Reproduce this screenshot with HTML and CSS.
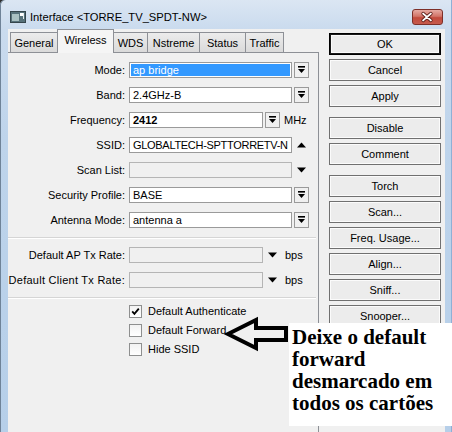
FILE: index.html
```html
<!DOCTYPE html>
<html>
<head>
<meta charset="utf-8">
<link rel="stylesheet" href="styles.css">
</head>
<body>
<div class="window">
  <div class="titlebar">
    <svg class="appicon" width="16" height="12" viewBox="0 0 16 12">
      <rect x="0.5" y="0.5" width="15" height="11" fill="#56717a" stroke="#34454c"/>
      <rect x="2" y="3" width="7" height="7" fill="#a9c0c2"/>
      <rect x="10" y="2" width="3" height="3" fill="#ffffff"/>
      <rect x="13" y="2" width="1" height="6" fill="#e8eef0"/>
    </svg>
    <span class="title">Interface &lt;TORRE_TV_SPDT-NW&gt;</span>
    <div class="close">
      <svg width="31" height="16" viewBox="0 0 31 16">
        <path d="M11.5 4.5 L19.5 11.5 M19.5 4.5 L11.5 11.5" stroke="#5a1c16" stroke-width="3.6" stroke-linecap="round"/>
        <path d="M11.5 4.5 L19.5 11.5 M19.5 4.5 L11.5 11.5" stroke="#ffffff" stroke-width="2" stroke-linecap="round"/>
      </svg>
    </div>
  </div>
  <div class="client">
    <div class="left">
      <div class="tabs">
        <div class="tab w-general">General</div>
        <div class="tab sel w-wireless">Wireless</div>
        <div class="tab w-wds">WDS</div>
        <div class="tab w-nstreme">Nstreme</div>
        <div class="tab w-status">Status</div>
        <div class="tab w-traffic">Traffic</div>
      </div>
      <div class="panel">
        <div class="row">
          <span class="lbl">Mode:</span>
          <div class="field long"><span class="hl">ap bridge</span></div>
          <div class="ddbtn"><svg width="13" height="14" viewBox="0 0 13 14"><rect x="3" y="3" width="7" height="1.6"/><polygon points="3,6 10,6 6.5,10"/></svg></div>
        </div>
        <div class="row">
          <span class="lbl">Band:</span>
          <div class="field long">2.4GHz-B</div>
          <div class="ddbtn"><svg width="13" height="14" viewBox="0 0 13 14"><rect x="3" y="3" width="7" height="1.6"/><polygon points="3,6 10,6 6.5,10"/></svg></div>
        </div>
        <div class="row">
          <span class="lbl">Frequency:</span>
          <div class="field short bold">2412</div>
          <div class="ddbtn"><svg width="13" height="14" viewBox="0 0 13 14"><rect x="3" y="3" width="7" height="1.6"/><polygon points="3,6 10,6 6.5,10"/></svg></div>
          <span class="unit">MHz</span>
        </div>
        <div class="row">
          <span class="lbl">SSID:</span>
          <div class="field long tight">GLOBALTECH-SPTTORRETV-N</div>
          <svg class="tri" width="10" height="6" viewBox="0 0 10 6"><polygon points="0,5.5 9,5.5 4.5,0.5"/></svg>
        </div>
        <div class="row">
          <span class="lbl">Scan List:</span>
          <div class="field long off"></div>
          <svg class="tri" width="10" height="6" viewBox="0 0 10 6"><polygon points="0,0.5 9,0.5 4.5,5.5"/></svg>
        </div>
        <div class="row">
          <span class="lbl">Security Profile:</span>
          <div class="field long">BASE</div>
          <div class="ddbtn"><svg width="13" height="14" viewBox="0 0 13 14"><rect x="3" y="3" width="7" height="1.6"/><polygon points="3,6 10,6 6.5,10"/></svg></div>
        </div>
        <div class="row">
          <span class="lbl">Antenna Mode:</span>
          <div class="field long">antenna a</div>
          <div class="ddbtn"><svg width="13" height="14" viewBox="0 0 13 14"><rect x="3" y="3" width="7" height="1.6"/><polygon points="3,6 10,6 6.5,10"/></svg></div>
        </div>
        <div class="sep"></div>
        <div class="row">
          <span class="lbl">Default AP Tx Rate:</span>
          <div class="field short off"></div>
          <svg class="tri tri-rate" width="10" height="6" viewBox="0 0 10 6"><polygon points="0,0.5 9,0.5 4.5,5.5"/></svg>
          <span class="unit bps">bps</span>
        </div>
        <div class="row">
          <span class="lbl wide">Default Client Tx Rate:</span>
          <div class="field short off"></div>
          <svg class="tri tri-rate" width="10" height="6" viewBox="0 0 10 6"><polygon points="0,0.5 9,0.5 4.5,5.5"/></svg>
          <span class="unit bps">bps</span>
        </div>
        <div class="sep sep2"></div>
        <div class="check">
          <span class="box"><svg width="11" height="11" viewBox="0 0 11 11"><path d="M2.2 5.4 L4.4 7.8 L8.8 2.6" fill="none" stroke="#000" stroke-width="1.8"/></svg></span>
          <span class="ctext">Default Authenticate</span>
        </div>
        <div class="check">
          <span class="box"></span>
          <span class="ctext">Default Forward</span>
        </div>
        <div class="check">
          <span class="box"></span>
          <span class="ctext">Hide SSID</span>
        </div>
      </div>
    </div>
    <div class="buttons">
      <div class="btn default">OK</div>
      <div class="btn">Cancel</div>
      <div class="btn gap">Apply</div>
      <div class="btn">Disable</div>
      <div class="btn gap">Comment</div>
      <div class="btn">Torch</div>
      <div class="btn">Scan...</div>
      <div class="btn">Freq. Usage...</div>
      <div class="btn">Align...</div>
      <div class="btn">Sniff...</div>
      <div class="btn">Snooper...</div>
    </div>
  </div>
  <svg class="arrow" width="70" height="40" viewBox="222 314 70 40">
    <polygon points="228,334 256,320 256,328 286,328 286,340 256,340 256,348" fill="none" stroke="#000" stroke-width="4" stroke-linejoin="miter"/>
  </svg>
  <div class="note">Deixe o default<br>forward<br>desmarcado em<br>todos os cartões</div>
</div>
</body>
</html>
```

FILE: styles.css
```css
* { box-sizing: border-box; }
html, body { margin: 0; padding: 0; }
body {
  width: 452px;
  height: 432px;
  overflow: hidden;
  background: #2e2e2e;
  font-family: "Liberation Sans", Arial, sans-serif;
  font-size: 11px;
  color: #000;
}
.window {
  position: relative;
  width: 452px;
  height: 432px;
  border-top-left-radius: 5px;
  background: linear-gradient(180deg, #dbe6f3 0px, #cadbee 29px, #bed4eb 140px, #b6cfe9 432px);
  box-shadow: inset 1px 0 0 #6f8398, inset -1px 0 0 #8eb0d6;
}
.titlebar {
  height: 29px;
  padding: 4px 0 0 10px;
  display: flex;
  align-items: center;
}
.appicon { flex: none; margin-top: 1px; }
.title {
  margin-left: 4px;
  font-size: 11.2px;
  color: #000;
}
.close {
  margin-left: auto;
  margin-right: 9px;
  align-self: flex-start;
  margin-top: 5px;
  width: 31px;
  height: 16px;
  border: 1px solid #7d2f28;
  border-radius: 3px;
  background: linear-gradient(180deg, #e6aaa2 0%, #d27468 45%, #c24a3c 55%, #c65a4c 100%);
  display: flex;
}
.close svg { margin: -1px 0 0 -1px; }
.client {
  margin: 0 7px 0 8px;
  height: 403px;
  background: #f0f0f0;
  display: flex;
}
.left {
  width: 311px;
  flex: none;
  display: flex;
  flex-direction: column;
}
.tabs {
  height: 23px;
  display: flex;
  align-items: flex-end;
  padding-left: 2px;
}
.tab {
  height: 20px;
  border: 1px solid #8d9096;
  border-bottom: none;
  margin-left: -1px;
  background: linear-gradient(180deg, #ececec, #dadada);
  text-align: center;
  line-height: 20px;
  font-size: 11px;
}
.tab:first-child { margin-left: 0; }
.tab.sel {
  height: 24px;
  margin-bottom: -1px;
  background: #f5f5f5;
  position: relative;
  z-index: 1;
  line-height: 20px;
}
.w-general { width: 48px; }
.w-wireless { width: 57px; }
.w-wds { width: 35px; }
.w-nstreme { width: 53px; }
.w-status { width: 47px; }
.w-traffic { width: 39px; }
.panel {
  flex: 1;
  border-top: 1px solid #8d9096;
  border-right: 1px solid #8d9096;
  padding-top: 9px;
}
.row {
  height: 16px;
  margin-bottom: 9px;
  display: flex;
  align-items: center;
}
.lbl {
  width: 117px;
  margin-right: 4px;
  text-align: right;
  white-space: nowrap;
  flex: none;
}
.lbl.wide { letter-spacing: 0.26px; }
.field {
  height: 16px;
  border: 1px solid #9a9a9a;
  background: #fff;
  padding: 0 3px;
  line-height: 14px;
  white-space: nowrap;
  overflow: hidden;
  flex: none;
}
.field.long { width: 163px; }
.field.short { width: 134px; }
.field.bold { font-weight: bold; }
.field.tight { letter-spacing: -0.3px; padding-right: 0; }
.field.off { background: #f0f0f0; border-color: #b5b5b5; }
.hl {
  display: block;
  margin: 1px -2px 0 -2px;
  height: 12px;
  line-height: 12px;
  padding-left: 2px;
  background: #3399ff;
  color: #fff;
}
.ddbtn {
  width: 15px;
  height: 16px;
  margin-left: 2px;
  border: 1px solid #9a9a9a;
  background: #f0f0f0;
  flex: none;
}
.ddbtn svg { display: block; fill: #000; }
.unit { margin-left: 4px; }
.tri { margin-left: 5px; fill: #000; flex: none; }
.tri-rate { margin-left: 5px; }
.unit.bps { margin-left: 7px; }
.sep {
  height: 2px;
  margin: 3px 2px 8px 0;
  border-top: 1px solid #d5d5d5;
  border-bottom: 1px solid #ffffff;
}
.sep2 { margin: 0 2px 5px 0; }
.check {
  height: 14px;
  margin-bottom: 5px;
  padding-left: 121px;
  display: flex;
  align-items: center;
}
.box {
  width: 13px;
  height: 13px;
  border: 1px solid #8e8f8f;
  background: linear-gradient(180deg, #f2f2f2, #ffffff);
  flex: none;
  display: flex;
}
.box svg { display: block; margin: 0; }
.ctext { margin-left: 6px; white-space: nowrap; }
.buttons {
  width: 112px;
  margin-left: 10px;
  padding-top: 4px;
  display: flex;
  flex-direction: column;
}
.btn {
  height: 22px;
  margin-bottom: 4px;
  border: 1px solid #707070;
  background: #ececec;
  box-shadow: inset 0 0 0 1px #fbfbfb;
  text-align: center;
  line-height: 20px;
  font-size: 11px;
  flex: none;
}
.btn.gap { margin-bottom: 10px; }
.btn.default {
  border: 1px solid #000;
  box-shadow: inset 0 0 0 1px #1a1a1a, inset 0 0 0 2px #fbfbfb;
}
.arrow {
  position: absolute;
  left: 222px;
  top: 314px;
}
.note {
  position: absolute;
  left: 289px;
  top: 323px;
  width: 163px;
  height: 103px;
  background: #fff;
  padding: 3px 0 0 3px;
  font-family: "Liberation Serif", "Times New Roman", serif;
  font-weight: bold;
  font-size: 21px;
  line-height: 22px;
  white-space: nowrap;
  color: #000;
}
```
